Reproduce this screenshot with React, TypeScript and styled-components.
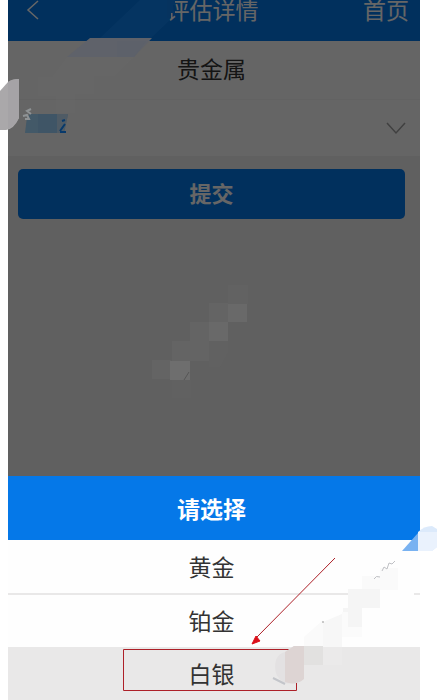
import React, { useState } from "react";
import styled, { createGlobalStyle } from "styled-components";

const GlobalStyle = createGlobalStyle`
  * { box-sizing: border-box; }
  body {
    margin: 0;
    background: #fff;
    font-family: "Noto Sans CJK SC", sans-serif;
  }
  button, select { font: inherit; }
`;

const Phone = styled.main`
  display: flex;
  flex-direction: column;
  min-height: 100vh;
  margin: 0 20px 0 8px;
`;

const Screen = styled.section`
  position: relative;
  flex: 1;
  display: flex;
  flex-direction: column;
  background: #f0f0f0;
`;

const Backdrop = styled.div`
  position: absolute;
  inset: 0;
  background: rgba(0, 0, 0, 0.6);
`;

const NavBar = styled.header`
  display: grid;
  grid-template-columns: 1fr auto 1fr;
  align-items: start;
  height: 41px;
  padding: 0 11px 0 8px;
  background: #0478e8;
  color: #fff;
  font-size: 23px;
  line-height: 19px;
`;

const BackButton = styled.button`
  justify-self: start;
  display: flex;
  padding: 0 10px;
  border: 0;
  background: none;
  color: inherit;
`;

const NavTitle = styled.h1`
  margin: 0;
  font-size: inherit;
  font-weight: 400;
`;

const HomeLink = styled.a`
  justify-self: end;
  color: inherit;
  text-decoration: none;
`;

const Card = styled.div`
  background: #fcfcfc;
`;

const CardTitle = styled.h2`
  margin: 0;
  padding: 0 5px 4px 0;
  border-bottom: 1px solid #f6f6f6;
  font-size: 23px;
  font-weight: 400;
  line-height: 54px;
  color: #333;
  text-align: center;
`;

const SelectField = styled.label`
  display: grid;
  align-items: center;
  height: 56px;
  padding: 0 14px;

  & > * { grid-area: 1 / 1; }
  & > svg { justify-self: end; }
`;

const Select = styled.select`
  width: 100%;
  height: 40px;
  border: 0;
  appearance: none;
  background: none;
`;

const SubmitButton = styled.button`
  height: 50px;
  margin: 13px 15px 0 10px;
  padding: 0 0 4px;
  border: 0;
  border-radius: 5px;
  background: #0478e8;
  color: #fff;
  font-size: 22px;
  font-weight: 700;
`;

const Sheet = styled.section`
  position: relative;
  background: #fff;
`;

const SheetTitle = styled.h2`
  margin: 0;
  padding-right: 5px;
  background: #0578e8;
  color: #fff;
  font-size: 23px;
  font-weight: 700;
  line-height: 64px;
  text-align: center;
`;

const Options = styled.ul`
  margin: 0;
  padding: 0;
  list-style: none;

  li:nth-child(2) { border-top: 1px solid #e9e8e8; }
  li:nth-child(2) button { box-shadow: inset 0 1px #e9e8e8; }
`;

const Option = styled.button<{ $active: boolean }>`
  display: block;
  width: 100%;
  height: 53px;
  padding: 0 5px 2px 0;
  border: 0;
  background: ${(p) => (p.$active ? "#e9e8e8" : "#fefefe")};
  color: #333;
  font-size: 23px;
  text-align: center;
`;

const Drawing = styled.svg<{ $side: "left" | "right" }>`
  position: absolute;
  top: 0;
  ${(p) => (p.$side === "left" ? "left: -8px;" : "right: -20px;")}
  pointer-events: none;
`;

const OPTIONS = ["黄金", "铂金", "白银"];

function ScreenMarks() {
  return (
    <Drawing $side="left" width="280" height="420" aria-hidden="true">
      <path d="M100 38L140 0H170V20L151 38Z" fill="#5d8cb8" opacity=".05" />
      <path d="M167 0H175V5H173V11H175V13H171V18H167Z" fill="#06335f" />
      <path d="M90 38H152L134 57H67Z" fill="#5f626a" />
      <path d="M117 41H146L134 57H117Z" fill="#5b606b" opacity=".6" />
      <path d="M67 57H134L114 76H94V94H75V113H56V96H38V77H52Z" fill="#747474" opacity=".1" />
      <path d="M0 91L8 82Q12 79 19 79V118Q14 129 6 130H0Z" fill="#aaa8aa" />
      <path d="M8 82Q12 79 19 79V118Q15 125 8 129Z" fill="#a5a3a6" />
      <path d="M25 133L27 117L30 114H68L64 133Z" fill="#435968" />
      <path d="M38 114H57V133H38Z" fill="#3f5566" />
      <path d="M57 114H68L64 133H57Z" fill="#4f5b65" />
      <path d="M62 121L65 120M65 124L60 131M60 132H66" stroke="#07396b" strokeWidth="2" fill="none" />
      <path d="M31 109L27 111L31 114M23 116L27 115L29 119L25 119" stroke="#8f9395" strokeWidth="2" fill="none" />
      <path d="M228 285H248V304H228Z" fill="#646464" opacity=".6" />
      <path d="M209 303H228V322H209ZM190 322H209V341H190ZM172 341H209V361H172ZM152 360H171V379H152Z" fill="#646464" />
      <path d="M228 304H247V322H228ZM209 322H228V341H209Z" fill="#696969" />
      <path d="M170 361H190V380H170Z" fill="#6e6e6e" />
      <path d="M209 341H228V352L220 367H209ZM172 380H191V398H172Z" fill="#646464" opacity=".4" />
      <path d="M189 372L184 380" stroke="#565656" />
    </Drawing>
  );
}

function SheetMarks() {
  return (
    <Drawing $side="right" width="320" height="224" aria-hidden="true">
      <path d="M298 56Q304 50 312 50L317 53V71L312 75H298Z" fill="#dceafb" />
      <path d="M298 56H317V71L312 75H298Z" fill="#eaf2fd" />
      <path d="M282 75L298 57V75Z" fill="#79b2f1" />
      <path d="M228 113H294V120H228Z" fill="#fefefe" />
      <path d="M242 100H260V92H278V114H242Z" fill="#fafafa" />
      <path d="M228 113H260V132H242V151H223V132H228Z" fill="#f5f5f5" />
      <path d="M222 136H228V151H242V161H222Z" fill="#fbfbfb" />
      <path d="M203 146L222 138V171H203Z" fill="#f7f7f7" />
      <path d="M184 161L203 144V171H184Z" fill="#fafafa" />
      <path d="M203 171H222V189H203Z" fill="#ebeaea" />
      <path d="M184 170H203V189H184Z" fill="#e2e1e0" />
      <path d="M203 147V145" stroke="#999" strokeWidth="1" />
      <path
        d="M254 103Q256 99 260 101M262 95L264 91L267 93L269 87L272 88L275 85"
        fill="none"
        stroke="#bfc0c4"
        strokeWidth="1"
      />
      <g fill="none" stroke="#ad2028" strokeWidth="1">
        <path d="M176 173.5H3.5V214.5H176.500V207" />
        <path d="M215 82L137 161" />
      </g>
      <path d="M132 168L136 160L140 165Z" fill="#db101b" stroke="#db101b" />
      <path d="M156 184Q159 177 165 176L174 170H183V203Q178 209 165 207Q152 200 156 184Z" fill="#e3e1e2" />
      <path d="M165 176L174 170H184V203Q176 210 165 206Z" fill="#ddd4d3" />
      <path d="M153 202L165 208" stroke="#c3c5ca" strokeWidth="2" />
    </Drawing>
  );
}

export default function App() {
  const [selected, setSelected] = useState("白银");
  return (
    <>
      <GlobalStyle />
      <Phone>
        <Screen>
          <NavBar>
            <BackButton aria-label="返回">
              <svg width="14" height="20" viewBox="0 0 14 20" fill="none" stroke="currentColor" strokeWidth="1.5">
                <path d="M12 1L2 10L12 19" />
              </svg>
            </BackButton>
            <NavTitle>评估详情</NavTitle>
            <HomeLink href="#home">首页</HomeLink>
          </NavBar>
          <Card>
            <CardTitle>贵金属</CardTitle>
            <SelectField>
              <Select aria-label="贵金属" defaultValue="">
                <option value="" />
                {OPTIONS.map((name) => (
                  <option key={name}>{name}</option>
                ))}
              </Select>
              <svg width="20" height="14" viewBox="0 0 20 14" fill="none" stroke="#a0a0a0" strokeWidth="1.5">
                <path d="M1 2L10 12L19 2" />
              </svg>
            </SelectField>
          </Card>
          <SubmitButton>提交</SubmitButton>
          <Backdrop />
          <ScreenMarks />
        </Screen>
        <Sheet aria-label="请选择">
          <SheetTitle>请选择</SheetTitle>
          <Options>
            {OPTIONS.map((name) => (
              <li key={name}>
                <Option $active={name === selected} aria-pressed={name === selected} onClick={() => setSelected(name)}>
                  {name}
                </Option>
              </li>
            ))}
          </Options>
          <SheetMarks />
        </Sheet>
      </Phone>
    </>
  );
}
